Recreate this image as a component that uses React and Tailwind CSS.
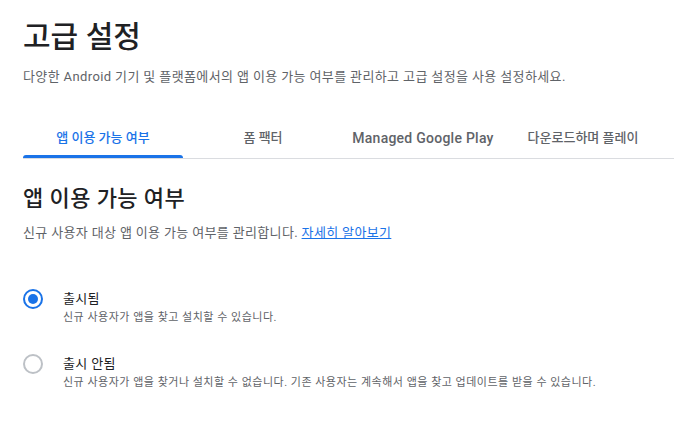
import React, { useState } from 'react';

const tabs = ['앱 이용 가능 여부', '폼 팩터', 'Managed Google Play', '다운로드하며 플레이'];

const options = [
  {
    id: 'published',
    label: '출시됨',
    desc: '신규 사용자가 앱을 찾고 설치할 수 있습니다.',
  },
  {
    id: 'unpublished',
    label: '출시 안됨',
    desc: '신규 사용자가 앱을 찾거나 설치할 수 없습니다. 기존 사용자는 계속해서 앱을 찾고 업데이트를 받을 수 있습니다.',
  },
];

const Radio = ({ checked }) => (
  <span
    className={`flex h-5 w-5 shrink-0 items-center justify-center rounded-full border-2 ${
      checked ? 'border-[#1a73e8]' : 'border-[#bdc1c6]'
    }`}
  >
    {checked && <span className="h-[10px] w-[10px] rounded-full bg-[#1a73e8]" />}
  </span>
);

const App = () => {
  const [activeTab, setActiveTab] = useState(0);
  const [selected, setSelected] = useState('published');

  return (
    <div className="min-h-[440px] bg-white pl-[23px] text-[#202124] font-['Roboto','Noto_Sans_CJK_KR',sans-serif]">
      <h1 className="pt-[17px] text-[30px] leading-[40px] font-medium">고급 설정</h1>
      <p className="mt-[10px] text-[13px] leading-[20px] tracking-[0.38px] text-[#5f6368]">
        다양한 Android 기기 및 플랫폼에서의 앱 이용 가능 여부를 관리하고 고급 설정을 사용 설정하세요.
      </p>

      <div className="mt-[31px] flex border-b border-[#dadce0]">
        {tabs.map((tab, i) => (
          <button
            key={tab}
            onClick={() => setActiveTab(i)}
            className={`relative flex h-10 w-40 items-center justify-center font-medium ${
              i === 2 ? 'text-[14px] tracking-[0.25px]' : 'text-[13px]'
            } ${activeTab === i ? 'text-[#1a73e8]' : 'text-[#5f6368]'}`}
          >
            {tab}
            {activeTab === i && (
              <span className="absolute bottom-0 left-0 right-0 h-[3px] rounded-t-[3px] bg-[#1a73e8]" />
            )}
          </button>
        ))}
      </div>

      <h2 className="mt-[24px] text-[22px] leading-[32px] tracking-[0.4px] font-medium">앱 이용 가능 여부</h2>
      <p className="mt-[8px] text-[13px] leading-[20px] tracking-[0.35px] text-[#5f6368]">
        신규 사용자 대상 앱 이용 가능 여부를 관리합니다.{' '}
        <a href="#" className="text-[#1a73e8] underline">자세히 알아보기</a>
      </p>

      <div className="mt-[46px] flex flex-col gap-[28px]">
        {options.map((opt) => (
          <label
            key={opt.id}
            className="flex cursor-pointer gap-[20px]"
            onClick={() => setSelected(opt.id)}
          >
            <span className="flex h-5 items-center">
              <Radio checked={selected === opt.id} />
            </span>
            <span className="flex flex-col">
              <span className="text-[13px] leading-[20px] tracking-[0.35px] text-[#202124]">{opt.label}</span>
              <span className="mt-[1px] text-[11px] leading-[16px] tracking-[0.5px] text-[#5f6368]">{opt.desc}</span>
            </span>
          </label>
        ))}
      </div>
    </div>
  );
};

export default App;
